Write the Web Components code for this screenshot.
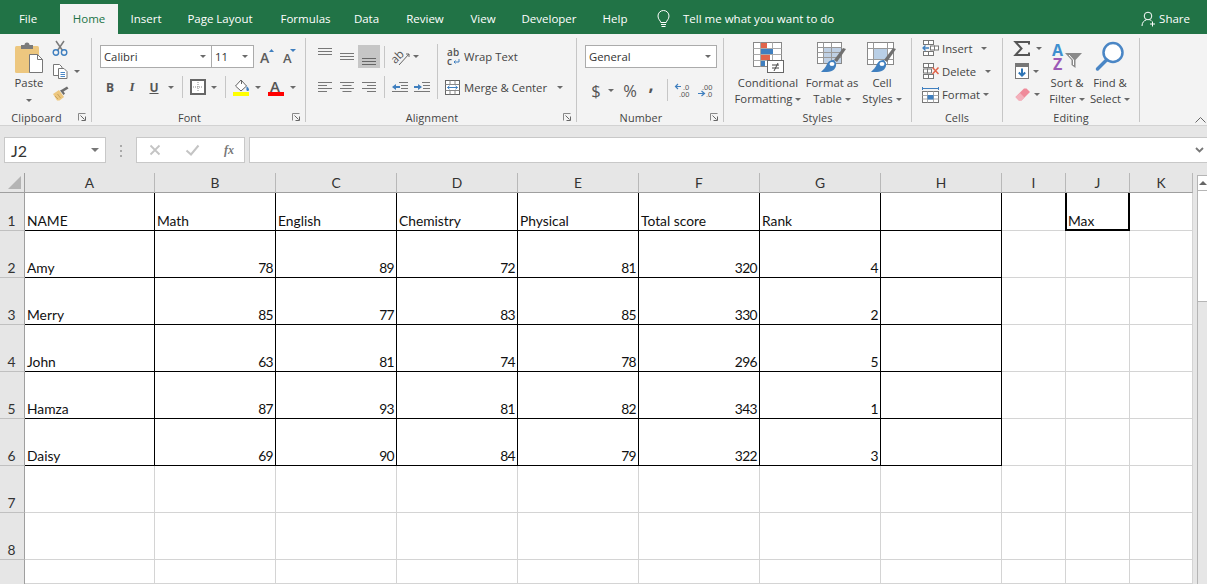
<![CDATA[<!DOCTYPE html>
<html lang="en"><head><meta charset="utf-8"><title>Excel</title>
<style>
html,body{margin:0;height:100%;overflow:hidden;background:#e6e6e6}
body{font-family:"Open Sans","Liberation Sans",sans-serif;width:1207px;height:584px}
x-app{display:block}
</style></head><body>
<x-app></x-app>
<script>
const ICONS={
paste:[30,31,`<rect x="1" y="4" width="24" height="27" rx="1.5" fill="#edc77f"/><path d="M7 7V3h3.5a2.5 2.5 0 0 1 5 0H19v4z" fill="#7b7b7b"/><path d="M15.5 12.5h8l5 5v13h-13z" fill="#fff" stroke="#777"/><path d="M23.5 12.5v5h5" fill="none" stroke="#777"/>`],
cut:[16,16,`<path d="M4 1l6.5 9.5M12 1L5.5 10.5" stroke="#7b7b7b" stroke-width="1.5" fill="none"/><circle cx="3.9" cy="12.5" r="2.7" fill="none" stroke="#3f7fbf" stroke-width="1.4"/><circle cx="12.1" cy="12.5" r="2.7" fill="none" stroke="#3f7fbf" stroke-width="1.4"/>`],
copy:[16,16,`<path d="M1.5 1.5h6l2.500 2.500V12.500h-8.500z" fill="#fff" stroke="#777"/><path d="M6.500 5.500h5.500l3 3v7h-8.500z" fill="#fff" stroke="#777"/><path d="M8.500 9.500h4.500M8.500 11.500h4.500M8.500 13.500h4.500" stroke="#4a86c5"/>`],
painter:[18,15,`<path d="M1 8l6-4 5 7-4.500 3.500H5z" fill="#edc77f"/><path d="M3 10l3 3M5.500 8l3 4" stroke="#c9a45f"/><path d="M8 4.500l3.500 4.500L13 7.500 11.500 5.500 16.500 2.500 15 .5 10 3.500z" fill="#6d6d6d"/>`],
growA:[16,17,`<text x="0" y="15" font-family="Open Sans" font-size="14" font-weight="600" fill="#5c5c5c">A</text><path d="M9 4l2.500-3 2.500 3z" fill="#3f7fbf"/>`],
shrinkA:[14,17,`<text x="0" y="15" font-family="Open Sans" font-size="13" font-weight="600" fill="#5c5c5c">A</text><path d="M7 1h6l-3 3z" fill="#3f7fbf"/>`],
borders:[16,16,`<rect x="1" y="1" width="14" height="14" fill="#fff" stroke="#666" stroke-width="2"/><path d="M8 3v10M3 8h10" stroke="#888" stroke-dasharray="1 1"/>`],
fill:[17,17,`<path d="M8 1l5.500 6L8 12 2.500 7z" fill="#fff" stroke="#666"/><path d="M8.500 1V5" stroke="#666"/><path d="M13.500 7c2 2 2.500 3 2.500 3.700a1.300 1.300 0 0 1-2.600 0z" fill="#3f7fbf"/><rect x="0" y="13" width="16" height="4" fill="#ffff00"/>`],
fontc:[17,17,`<text x="2" y="12.500" font-family="Open Sans" font-size="15" font-weight="600" fill="#555">A</text><rect x="0" y="13" width="16" height="4" fill="#ff0000"/>`],
atop:[14,8,`<path d="M0 .5h14M0 3.500h14M0 6.500h14" stroke="#777"/>`],
amid:[14,8,`<path d="M0 .5h14M0 3.500h14M0 6.500h14" stroke="#777"/>`],
abot:[14,8,`<path d="M0 1.500h14M0 4.500h14M0 7.500h14" stroke="#666"/>`],
orient:[17,18,`<text transform="rotate(-45 5 12)" x="0" y="13" font-family="Open Sans" font-size="11.500" fill="#555">ab</text><path d="M6 17L16 6M16 6h-3M16 6v3" stroke="#666" fill="none"/>`],
wrap:[13,16,`<text x="0 6 0" y="7 7 15.500" font-family="Open Sans" font-size="10" font-weight="600" fill="#555">abc</text><path d="M12 10v3H7M8.500 11.500L7 13l1.500 1.500" stroke="#3f7fbf" fill="none"/>`],
al:[14,10,`<path d="M0 .5h14M0 3.500h9M0 6.500h14M0 9.500h9" stroke="#777"/>`],
ac:[14,10,`<path d="M0 .5h14M2.500 3.500h9M0 6.500h14M2.500 9.500h9" stroke="#777"/>`],
ar:[14,10,`<path d="M0 .5h14M5 3.500h9M0 6.500h14M5 9.500h9" stroke="#777"/>`],
indl:[16,11,`<path d="M7 .5h9M9 3.500h7M9 6.500h7M0 9.500h16" stroke="#777"/><path d="M0 5l4-3v2h4v2H4v2z" fill="#3f7fbf"/>`],
indr:[16,11,`<path d="M8 .5h8M9 3.500h7M9 6.500h7M0 9.500h16" stroke="#777"/><path d="M8 5L4 2v2H0v2h4v2z" fill="#3f7fbf"/>`],
merge:[15,15,`<rect x=".5" y=".5" width="14" height="14" fill="#fff" stroke="#666"/><path d="M.5 4.500h14M.5 10.500h14M5 .5v4M10 .5v4M5 10.500v4M10 10.500v4" stroke="#888"/><path d="M2.500 7.500h10M4.500 5.800L2.500 7.500l2 1.700M10.500 5.800l2 1.700-2 1.700" stroke="#3f7fbf" fill="none"/>`],
decl:[15,14,`<path d="M0 3.500h6M3 1L.5 3.500 3 6" stroke="#3f7fbf" fill="none" stroke-width="1.200"/><text x="8" y="6.500" font-family="Liberation Sans" font-size="7.500" fill="#555">.0</text><text x="4" y="13.500" font-family="Liberation Sans" font-size="7.500" fill="#555">.00</text>`],
decr:[15,14,`<text x="4" y="6.500" font-family="Liberation Sans" font-size="7.500" fill="#555">.00</text><path d="M0 10.500h6M3.500 8L6.500 10.500 3.500 13" stroke="#3f7fbf" fill="none" stroke-width="1.200"/><text x="8" y="13.500" font-family="Liberation Sans" font-size="7.500" fill="#555">.0</text>`],
cond:[31,31,`<rect x=".5" y=".5" width="28" height="24" fill="#fff" stroke="#888"/><path d="M.5 6.500h28M.5 12.500h28M.5 18.500h28M7.500 .5v24M19.500 .5v24" stroke="#aaa"/><rect x="8" y="1" width="6" height="5" fill="#e1644a"/><rect x="8" y="7" width="12" height="5" fill="#3f7fbf"/><rect x="8" y="13" width="9" height="5" fill="#e1644a"/><rect x="8" y="19" width="4" height="5" fill="#3f7fbf"/><rect x="14.500" y="18.500" width="16" height="12" fill="#fff" stroke="#666"/><path d="M19 23h7M19 26h7M25 21l-4 8" stroke="#444"/>`],
ftable:[30,31,`<rect x=".5" y=".5" width="24" height="21" fill="#fff" stroke="#888"/><rect x="6" y="6" width="18" height="15" fill="#bfd0e4"/><path d="M.5 5.500h24M.5 10.500h24M.5 15.500h24M6.500 .5v21M14.500 .5v21" stroke="#999"/><path d="M29 7l-9 13-3-2 9-12z" fill="#707070"/><path d="M17 18c-4-.5-6 2-7 4-1 3-4 6-6 8h6c6 0 10-4 9-9z" fill="#3f7fbf"/><ellipse cx="15" cy="22" rx="2.500" ry="2" fill="#fff"/>`],
fcell:[30,31,`<rect x=".5" y=".5" width="26" height="22" fill="#fff" stroke="#888"/><rect x="7" y="7" width="13" height="10" fill="#b9cfe6"/><path d="M.5 6.500h26M.5 17.500h26M6.500 .5v22M20.500 .5v22" stroke="#999"/><path d="M29 7l-9 13-3-2 9-12z" fill="#707070"/><path d="M17 18c-4-.5-6 2-7 4-1 3-4 6-6 8h6c6 0 10-4 9-9z" fill="#3f7fbf"/><ellipse cx="15" cy="22" rx="2.500" ry="2" fill="#fff"/>`],
cins:[17,16,`<g fill="#fff" stroke="#777"><rect x="1.500" y=".5" width="5" height="4"/><rect x="6.500" y=".5" width="5" height="4"/><rect x="1.500" y="11.500" width="5" height="4"/><rect x="6.500" y="11.500" width="5" height="4"/><rect x="8.500" y="6" width="4" height="4"/><rect x="12.500" y="6" width="4" height="4"/></g><path d="M7 8H1M3.500 5.500L1 8l2.500 2.500" stroke="#3f7fbf" stroke-width="1.300" fill="none"/>`],
cdel:[17,16,`<g fill="#fff" stroke="#777"><rect x="1.500" y=".5" width="5" height="4"/><rect x="6.500" y=".5" width="5" height="4"/><rect x="1.500" y="11.500" width="5" height="4"/><rect x="6.500" y="11.500" width="5" height="4"/><rect x="1.500" y="6" width="4" height="4"/><rect x="5.500" y="6" width="4" height="4"/></g><path d="M10.500 4.500l6 6.500M16.500 4.500l-6 6.500" stroke="#e1644a" stroke-width="1.500"/>`],
cfmt:[17,17,`<path d="M.5 1v3M16.500 1v3M1 2.500h15" stroke="#3f7fbf"/><rect x=".5" y="5.500" width="16" height="11" fill="#fff" stroke="#777"/><path d="M.5 9.500h16M.5 13h16M5.500 5.500v11M11.500 5.500v11" stroke="#aaa"/><rect x="5.500" y="9" width="6" height="4.500" fill="#3f7fbf"/>`],
sigma:[16,15,`<path d="M15 3.500V1H1.500l6 6.500-6 6.500H15v-2.500" fill="none" stroke="#555" stroke-width="2"/>`],
fdown:[14,16,`<rect x=".5" y=".5" width="13" height="15" fill="#fff" stroke="#777"/><rect x="1" y="1" width="12" height="3" fill="#777"/><path d="M7 5.500v7M3.800 9.500L7 12.700l3.200-3.200" fill="none" stroke="#2e75b6" stroke-width="2"/>`],
eraser:[15,13,`<path d="M.5 9L9 .5h2.500L15 4l-8.500 8.500H4z" fill="#ef8a9a"/><path d="M.5 9l3 3.500h3L9.500 9.500 5 5z" fill="#f3b0bb"/>`],
sort:[30,28,`<defs><linearGradient id="az" gradientUnits="userSpaceOnUse" x1="0" y1="0" x2="0" y2="28"><stop offset=".5" stop-color="#3f8fd0"/><stop offset=".5" stop-color="#9b59b6"/></linearGradient></defs><text x="0 1" y="12.500 27" font-family="Open Sans" font-size="16" font-weight="700" fill="url(#az)">AZ</text><path d="M13 10h17l-6.500 7v8l-4-3v-5z" fill="#8a8a8a"/><path d="M17 12l4.500 5v5" fill="none" stroke="#fff"/>`],
find:[30,29,`<circle cx="18" cy="10.500" r="9.500" fill="#fff" stroke="#4a86c5" stroke-width="2.500"/><path d="M11.500 18L2.500 27" stroke="#4a86c5" stroke-width="3.500" stroke-linecap="round"/>`],
bulb:[13,18,`<path d="M3.800 12.500C3.500 10.500 1 9.500 1 6a5.500 5.500 0 0 1 11 0c0 3.500-2.500 4.500-2.800 6.500z" fill="none" stroke="#fff"/><path d="M4 14.500h5M4.500 16.500h4" stroke="#fff"/>`],
share:[15,16,`<circle cx="7" cy="5" r="3.800" fill="none" stroke="#fff"/><path d="M1 15c0-3.500 2-5.500 4.500-6.200M8.500 8.800c.8.200 1.500.6 2 1" fill="none" stroke="#fff"/><path d="M11.500 10.500v5M9 13h5" stroke="#fff"/>`],
x:[12,12,`<path d="M1.500 1.500l9 9M10.500 1.500l-9 9" stroke="#c4c4c4" stroke-width="1.800"/>`],
check:[15,12,`<path d="M1.500 6.500L6 10.500 13.500 1.500" fill="none" stroke="#c4c4c4" stroke-width="2"/>`],
launch:[8,8,`<path d="M.5 7.500v-7h7" fill="none" stroke="#888"/><path d="M2.500 2.500l4 4M7.500 3.500v4h-4" fill="none" stroke="#666"/>`]
};
customElements.define('x-icon',class extends HTMLElement{
  connectedCallback(){
    if(this.shadowRoot)return;
    const [w,h,b]=ICONS[this.getAttribute('n')];
    this.attachShadow({mode:'open'}).innerHTML=`<style>:host{display:inline-flex;flex:none}svg{display:block;overflow:visible}</style><svg width="${w}" height="${h}" viewBox="0 0 ${w} ${h}">${b}</svg>`;
  }
});
customElements.define('x-titlebar',class extends HTMLElement{
  constructor(){super();
    const tabs=[['File',56,4],['Home',58,0],['Insert',56,0],['Page Layout',92,0],['Formulas',79,0],['Data',43,0],['Review',74,0],['View',42,0],['Developer',90,0],['Help',42,0]];
    this.attachShadow({mode:'open'}).innerHTML=`<style>
    :host{display:flex;height:34px;background:#217346;color:#fff;font-size:11.5px;align-items:flex-end}
    .t{height:30px;display:flex;align-items:center;justify-content:center;padding-bottom:1px;box-sizing:border-box;flex:none}
    .on{background:#f3f3f3;color:#217346}
    .tell{display:flex;align-items:center;gap:13px;margin-left:21px;height:30px;padding-bottom:1px;box-sizing:border-box}
    .share{display:flex;align-items:center;gap:3px;margin-left:auto;margin-right:17px;height:30px;padding-bottom:1px;box-sizing:border-box}
    </style>`+tabs.map(([t,w,m])=>`<div class="t${t=='Home'?' on':''}" style="width:${w}px;margin-right:${m}px">${t}</div>`).join('')+
    `<div class="tell"><x-icon n="bulb"></x-icon><span>Tell me what you want to do</span></div><div class="share"><x-icon n="share"></x-icon><span>Share</span></div>`;
  }
});
customElements.define('x-group',class extends HTMLElement{
  constructor(){super();
    const lab=this.getAttribute('label'),w=this.getAttribute('w'),ln=this.hasAttribute('launch');
    this.attachShadow({mode:'open'}).innerHTML=`<style>
    :host{display:flex;flex-direction:column;flex:none;box-sizing:border-box;position:relative;height:84px;margin-top:4px;border-right:1px solid #c6c6c6;width:${w}px}
    .c{flex:1;display:flex;min-height:0}
    .l{height:11px;line-height:13px;text-align:center;font-size:10.9px;color:#444;letter-spacing:.1px;padding-right:${ln?18:0}px}
    .k{position:absolute;right:5px;bottom:1px;display:flex}
    </style><div class="c"><slot></slot></div><div class="l">${lab}</div>${ln?'<div class="k"><x-icon n="launch"></x-icon></div>':''}`;
  }
});
customElements.define('x-ribbon',class extends HTMLElement{
  constructor(){super();
    const a=(ml=0)=>`<i class="a" style="margin-left:${ml}px"></i>`;
    const ic=n=>`<x-icon n="${n}"></x-icon>`;
    this.attachShadow({mode:'open'}).innerHTML=`<style>
    :host{display:flex;height:92px;box-sizing:border-box;background:#f3f3f3;border-bottom:1px solid #d2d2d2;color:#444;font-size:11.3px;position:relative}
    .a{display:inline-block;flex:none;width:0;height:0;border:3px solid transparent;border-top:3px solid #6a6a6a;border-bottom:0}
    .col{display:flex;flex-direction:column}
    .row{display:flex;align-items:center}
    .sel{display:flex;align-items:center;justify-content:space-between;box-sizing:border-box;height:23px;background:#fff;border:1px solid #ababab;padding:0 5px 0 3px;color:#333;font-size:11.3px;font-family:"Open Sans",sans-serif}
    .b{width:22px;height:22px;display:flex;align-items:center;justify-content:center;flex:none}
    .sep{width:1px;background:#c6c6c6;flex:none;height:22px}
    .big{display:flex;flex-direction:column;align-items:center;line-height:16px;text-align:center;flex:none}
    .big .i{height:33px;display:flex;align-items:flex-start;justify-content:center}
    .big .w{white-space:nowrap;display:flex;align-items:center;justify-content:center;height:16px}
    .big .a{margin-left:3px}
    .cl{display:flex;align-items:center;height:20px;white-space:nowrap}
    .chev{position:absolute;right:1px;bottom:2px}
    </style>
    <x-group label="Clipboard" w="92" launch><div class="row" style="align-items:flex-start;padding-left:14px">
      <div class="big" style="width:30px;margin-top:4px"><div class="i" style="height:32px">${ic('paste')}</div><div class="w" style="height:18px">Paste</div><i class="a" style="margin:7px 0 0"></i></div>
      <div class="col" style="margin-left:8px;margin-top:2px;gap:7px">${ic('cut')}<div class="row">${ic('copy')}${a(6)}</div>${ic('painter')}</div>
    </div></x-group>
    <x-group label="Font" w="214" launch><div class="col" style="padding:7px 0 0 8px;gap:8px">
      <div class="row"><div class="sel" style="width:112px">Calibri<i class="a"></i></div><div class="sel" style="width:43px;margin-left:-1px">11<i class="a"></i></div>${'<span style="width:6px"></span>'}${ic('growA')}<span style="width:7px"></span>${ic('shrinkA')}</div>
      <div class="row" style="margin-left:-1px;font-weight:700;font-size:12px;color:#555">
       <div class="b">B</div><div class="b" style="font-style:italic;font-family:'Liberation Serif',serif;font-size:13px">I</div><div class="b"><u>U</u></div>${a(3)}<div class="sep" style="margin:0 0 0 8px"></div><span style="width:7px"></span>${ic('borders')}${a(5)}<div class="sep" style="margin-left:8px"></div><span style="width:7px"></span>${ic('fill')}${a(5)}<span style="width:7px"></span>${ic('fontc')}${a(5)}
      </div></div></x-group>
    <x-group label="Alignment" w="271" launch><div class="row" style="align-items:flex-start;padding-left:8px">
      <div class="col" style="margin-top:7px;gap:8px">
        <div class="row"><div class="b" style="height:23px;align-items:flex-start;padding-top:3px;box-sizing:border-box">${ic('atop')}</div><div class="b" style="height:23px">${ic('amid')}</div><div class="b" style="height:23px;background:#c6c6c6;align-items:flex-end;padding-bottom:3px;box-sizing:border-box">${ic('abot')}</div><div class="sep" style="margin-left:4px"></div><span style="width:8px"></span>${ic('orient')}${a(3)}</div>
        <div class="row"><div class="b">${ic('al')}</div><div class="b">${ic('ac')}</div><div class="b">${ic('ar')}</div><div class="sep" style="margin-left:4px"></div><span style="width:7px"></span>${ic('indl')}<span style="width:6px"></span>${ic('indr')}</div>
      </div>
      <div class="sep" style="height:55px;margin:6px 0 0 7px"></div>
      <div class="col" style="margin:7px 0 0 7px;gap:8px">
        <div class="row" style="height:23px;padding-left:2px">${ic('wrap')}<span style="margin-left:4px">Wrap Text</span></div>
        <div class="row" style="height:22px">${ic('merge')}<span style="margin-left:4px">Merge &amp; Center</span>${a(10)}</div>
      </div>
    </div></x-group>
    <x-group label="Number" w="147" launch><div class="col" style="padding:7px 0 0 8px;gap:8px">
      <div class="sel" style="width:132px">General<i class="a"></i></div>
      <div class="row" style="font-size:16.5px;color:#555">
        <span style="margin-left:6px;width:10px;text-align:center">$</span>${a(7)}<span style="margin-left:7px;width:18px;text-align:center">%</span><b style="margin:0 0 12px 6px;width:12px;text-align:center;font-size:18px;line-height:16px">,</b><span style="width:9px"></span><div class="sep" style="margin-left:1px"></div><span style="width:7px"></span>${ic('decl')}<span style="width:8px"></span>${ic('decr')}
      </div></div></x-group>
    <x-group label="Styles" w="188"><div class="row" style="align-items:flex-start;padding:4px 0 0 6px">
      <div class="big" style="width:76px"><div class="i">${ic('cond')}</div><div class="w">Conditional</div><div class="w">Formatting<i class="a"></i></div></div>
      <div class="big" style="width:52px"><div class="i">${ic('ftable')}</div><div class="w">Format as</div><div class="w">Table<i class="a"></i></div></div>
      <div class="big" style="width:48px"><div class="i">${ic('fcell')}</div><div class="w">Cell</div><div class="w">Styles<i class="a"></i></div></div>
    </div></x-group>
    <x-group label="Cells" w="91"><div class="col" style="padding-left:10px;gap:3px">
      <div class="cl">${ic('cins')}<span style="margin-left:3px">Insert</span>${a(9)}</div>
      <div class="cl">${ic('cdel')}<span style="margin-left:3px">Delete</span>${a(9)}</div>
      <div class="cl">${ic('cfmt')}<span style="margin-left:3px">Format</span>${a(3)}</div>
    </div></x-group>
    <x-group label="Editing" w="137"><div class="row" style="align-items:flex-start">
      <div class="col" style="width:39px;box-sizing:border-box;padding-left:11px;gap:3px">
        <div class="cl">${ic('sigma')}${a(6)}</div><div class="cl" style="padding-left:1px">${ic('fdown')}${a(4)}</div><div class="cl" style="padding-left:1px">${ic('eraser')}${a(4)}</div>
      </div>
      <div class="big" style="width:50px;margin-top:5px"><div class="i" style="height:32px">${ic('sort')}</div><div class="w">Sort &amp;</div><div class="w">Filter<i class="a"></i></div></div>
      <div class="big" style="width:36px;margin-top:4px"><div class="i">${ic('find')}</div><div class="w">Find &amp;</div><div class="w">Select<i class="a"></i></div></div>
    </div></x-group>
    <svg class="chev" width="11" height="6" viewBox="0 0 11 6"><path d="M.5 5.500l5-5 5 5" fill="none" stroke="#666"/></svg>`;
  }
});
customElements.define('x-formula',class extends HTMLElement{
  constructor(){super();
    this.attachShadow({mode:'open'}).innerHTML=`<style>
    :host{display:flex;box-sizing:border-box;height:47px;padding:11px 0 0 4px;background:#e6e6e6;align-items:flex-start}
    .box{height:26px;box-sizing:border-box;background:#fff;border:1px solid #c8c8c8;display:flex;align-items:center;flex:none}
    .nm{width:102px;justify-content:space-between;padding:0 6px;font:16px Lato,sans-serif;color:#333}
    .a{width:0;height:0;border:4px solid transparent;border-top:4px solid #777;border-bottom:0}
    .dots{width:30px;display:flex;flex-direction:column;align-items:center;gap:3px;padding-top:8px;box-sizing:border-box;flex:none}
    .dots i{width:2px;height:2px;background:#aaa}
    .fx{width:109px;padding-left:12px;gap:24px}
    .fxt{font:italic 700 12px "Liberation Serif",serif;color:#777}
    .in{flex:1;margin-left:4px;justify-content:flex-end;padding-right:3px;border-right:0}
    </style>
    <div class="box nm"><span>J2</span><i class="a"></i></div>
    <div class="dots"><i></i><i></i><i></i></div>
    <div class="box fx"><x-icon n="x"></x-icon><x-icon n="check"></x-icon><span class="fxt">fx</span></div>
    <div class="box in"><svg width="9" height="6" viewBox="0 0 9 6"><path d="M1 1l3.500 3.500L8 1" fill="none" stroke="#777" stroke-width="1.800"/></svg></div>`;
  }
});
customElements.define('x-sheet',class extends HTMLElement{
  constructor(){super();
    const cols=['A','B','C','D','E','F','G','H','I','J','K'];
    const data=[['NAME','Math','English','Chemistry','Physical','Total score','Rank'],
      ['Amy',78,89,72,81,320,4],['Merry',85,77,83,85,330,2],['John',63,81,74,78,296,5],
      ['Hamza',87,93,81,82,343,1],['Daisy',69,90,84,79,322,3]];
    let h=`<div class="ch corner"><svg width="13" height="13" viewBox="0 0 13 13"><path d="M13 0v13H0z" fill="#b4b4b4"/></svg></div>`;
    cols.forEach(c=>h+=`<div class="ch">${c}</div>`);
    for(let r=0;r<9;r++){
      h+=`<div class="rh">${r<8?r+1:''}</div>`;
      cols.forEach((c,i)=>{
        const v=data[r]&&data[r][i]; const blk=r<6&&i<8;
        let cl='c'+(blk?' k':'')+(typeof v=='number'?' n':'');
        if(r==0&&c=='J')cl+=' sel';
        const txt=(r==0&&c=='J')?'Max':(v===undefined?'':v);
        h+=`<div class="${cl}">${txt}</div>`;
      });
    }
    this.attachShadow({mode:'open'}).innerHTML=`<style>
    :host{display:flex;flex:1;background:#e6e6e6;overflow:hidden;height:411px}
    .g{display:grid;grid-template-columns:25px 130px repeat(7,121px) 64px 64px 63px;grid-template-rows:20px 38px repeat(7,47px) 24px;background:#fff;flex:none;font:13.8px Lato,"Liberation Sans",sans-serif;color:#111}
    .ch{background:#e6e6e6;border-right:1px solid #b8b8b8;border-bottom:1px solid #9f9f9f;display:flex;align-items:center;justify-content:center;box-sizing:border-box;color:#333}
    .corner{justify-content:flex-end;align-items:flex-end;padding:0 3px 3px 0;border-right-color:#9f9f9f}
    .rh{background:#e6e6e6;border-right:1px solid #9f9f9f;border-bottom:1px solid #c0c0c0;display:flex;align-items:flex-end;justify-content:center;box-sizing:border-box;color:#333;padding-bottom:1px;padding-right:1px}
    .rh:empty{border-bottom:0}
    .c{border-right:1px solid #d4d4d4;border-bottom:1px solid #d4d4d4;box-sizing:border-box;display:flex;align-items:flex-end;padding:0 2px 1px;white-space:nowrap;overflow:hidden}
    .c:empty{padding:0}
    .k{border-color:#000}
    .n{justify-content:flex-end;padding-right:2px;letter-spacing:-.6px}
    .sel{border-right-color:#000;border-bottom-color:#000;box-shadow:-1px 0 #000,inset 1px 0 #000,inset -1px 0 #000,inset 0 -1px #000;position:relative;overflow:visible}
    .sb{margin-left:4px;width:10px;box-sizing:content-box;border:1px solid #b5b5b5;border-width:1px 0 0 1px;background:#e6e6e6;display:flex;flex-direction:column;margin-top:2px;flex:1}
    .up{height:14px;background:#fff;border-bottom:1px solid #b5b5b5;display:flex;align-items:center;justify-content:center}
    .up i{width:0;height:0;border:4px solid transparent;border-bottom:4px solid #666;border-top:0}
    .th{height:110px;background:#fff;border-bottom:1px solid #b5b5b5}
    </style><div class="g">${h}</div><div class="sb"><div class="up"><i></i></div><div class="th"></div></div>`;
  }
});
customElements.define('x-app',class extends HTMLElement{
  constructor(){super();
    this.attachShadow({mode:'open'}).innerHTML=`<style>:host{display:flex;flex-direction:column;width:1207px;height:584px;overflow:hidden}</style>
    <x-titlebar></x-titlebar><x-ribbon></x-ribbon><x-formula></x-formula><x-sheet></x-sheet>`;
  }
});
</script>
</body></html>]]>
